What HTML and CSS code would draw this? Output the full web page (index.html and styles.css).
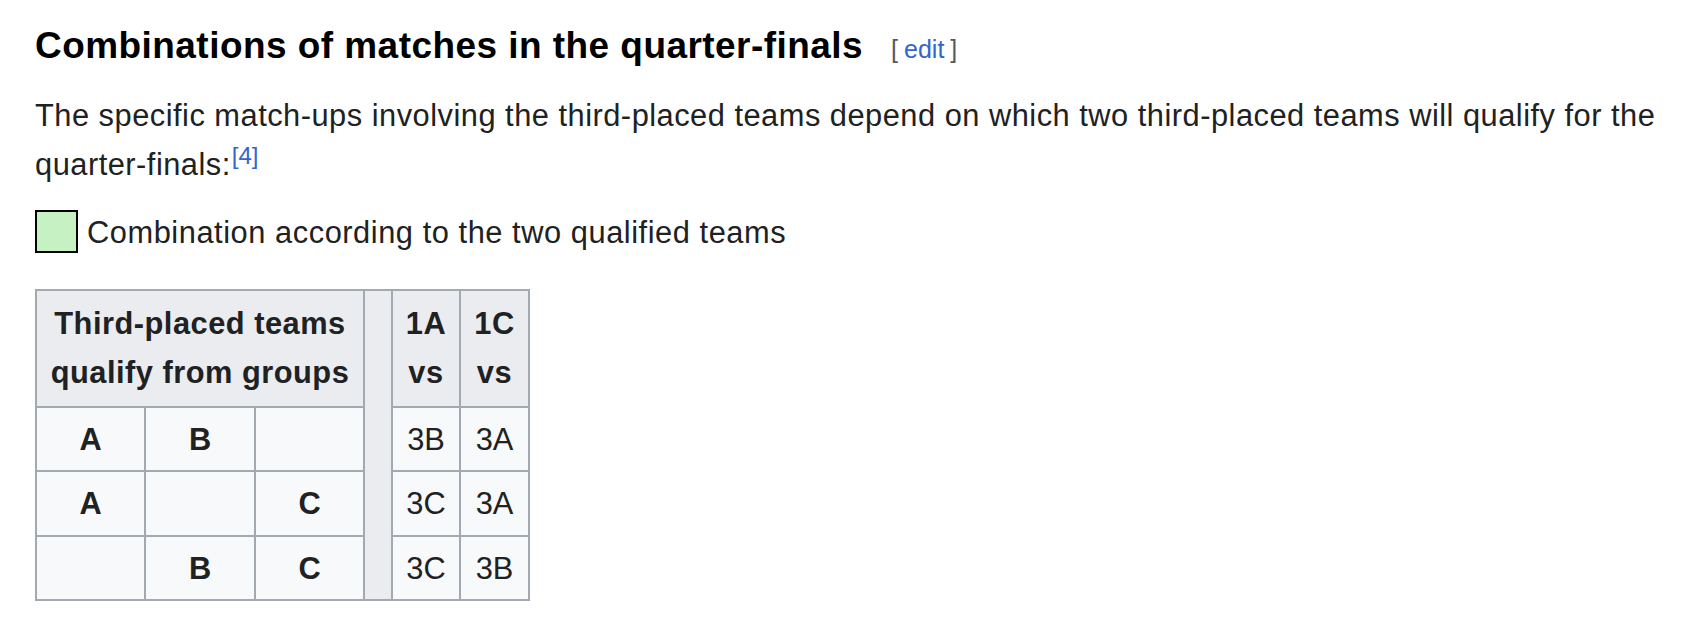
FILE: index.html
```html
<!DOCTYPE html>
<html lang="en">
<head>
<meta charset="utf-8">
<title>Combinations of matches in the quarter-finals</title>
<link rel="stylesheet" href="styles.css">
</head>
<body>
<div class="page">
  <h3 class="heading">
    <span class="headline">Combinations of matches in the quarter-finals</span><span class="editsection"><span class="bracket">[</span><a class="edit-link" href="#">edit</a><span class="bracket">]</span></span>
  </h3>
  <p class="para">The specific match-ups involving the third-placed teams depend on which two third-placed teams will qualify for the quarter-finals:<sup class="ref"><a href="#">[4]</a></sup></p>
  <div class="legend">
    <span class="legend-color"></span>
    <span class="legend-text">Combination according to the two qualified teams</span>
  </div>
  <table class="wikitable">
    <colgroup>
      <col class="c-grp"><col class="c-grp2"><col class="c-grp3"><col class="c-gap"><col class="c-m1"><col class="c-m2">
    </colgroup>
    <tr>
      <th colspan="3" class="hdr">Third-placed teams<br>qualify from groups</th>
      <th rowspan="4" class="gap"></th>
      <th class="hdr">1A<br>vs</th>
      <th class="hdr">1C<br>vs</th>
    </tr>
    <tr>
      <th class="grp">A</th><th class="grp">B</th><th class="grp"></th>
      <td>3B</td><td>3A</td>
    </tr>
    <tr>
      <th class="grp">A</th><th class="grp"></th><th class="grp">C</th>
      <td>3C</td><td>3A</td>
    </tr>
    <tr>
      <th class="grp"></th><th class="grp">B</th><th class="grp">C</th>
      <td>3C</td><td>3B</td>
    </tr>
  </table>
</div>
</body>
</html>
```

FILE: styles.css
```css
html, body {
  margin: 0;
  padding: 0;
  background: #ffffff;
}

body {
  font-family: "Liberation Sans", Arial, sans-serif;
  color: #202122;
  font-size: 30.8px;
}

.page {
  padding: 23px 20px 0 35px;
}

.heading {
  margin: 0;
  font-size: 36.96px;
  line-height: 46px;
  font-weight: bold;
  color: #000000;
}

.headline {
  letter-spacing: 0.47px;
}

.editsection {
  font-size: 25px;
  font-weight: normal;
  margin-left: 28px;
  vertical-align: baseline;
}

.bracket {
  color: #54595d;
}

.edit-link {
  color: #3366cc;
  text-decoration: none;
  margin: 0 6px;
}

.para {
  margin: 19px 0 0;
  line-height: 49.3px;
  letter-spacing: 0.5px;
}

.ref {
  font-size: 24px;
  line-height: 1;
  vertical-align: 11px;
  letter-spacing: 0;
  margin-left: 1px;
}

.ref a {
  color: #3366cc;
  text-decoration: none;
}

.legend {
  display: flex;
  align-items: flex-start;
  margin-top: 18.8px;
  height: 49.3px;
  line-height: 49.3px;
  letter-spacing: 0.55px;
}

.legend-color {
  display: block;
  box-sizing: border-box;
  width: 43px;
  height: 43px;
  margin-top: 2px;
  margin-right: 9px;
  border: 2px solid #000000;
  background: #c6f2c3;
}

.wikitable {
  margin-top: 31.3px;
  border-collapse: collapse;
  border: 2px solid #a2a9b1;
  background: #f8f9fa;
  color: #202122;
  line-height: 49.3px;
}

.c-grp { width: 109px; }
.c-grp2 { width: 110px; }
.c-grp3 { width: 109px; }
.c-gap { width: 28px; }
.c-m1 { width: 68px; }
.c-m2 { width: 69px; }

.wikitable th,
.wikitable td {
  border: 2px solid #a2a9b1;
  padding: 6.6px 0;
  text-align: center;
  font-weight: normal;
}

.wikitable th.hdr {
  background: #eaecf0;
  font-weight: bold;
  padding: 8.2px 0;
  letter-spacing: 0.5px;
}

.wikitable th.gap {
  background: #eaecf0;
  padding: 0;
}

.wikitable th.grp {
  font-weight: bold;
  background: #f8f9fa;
}
```
